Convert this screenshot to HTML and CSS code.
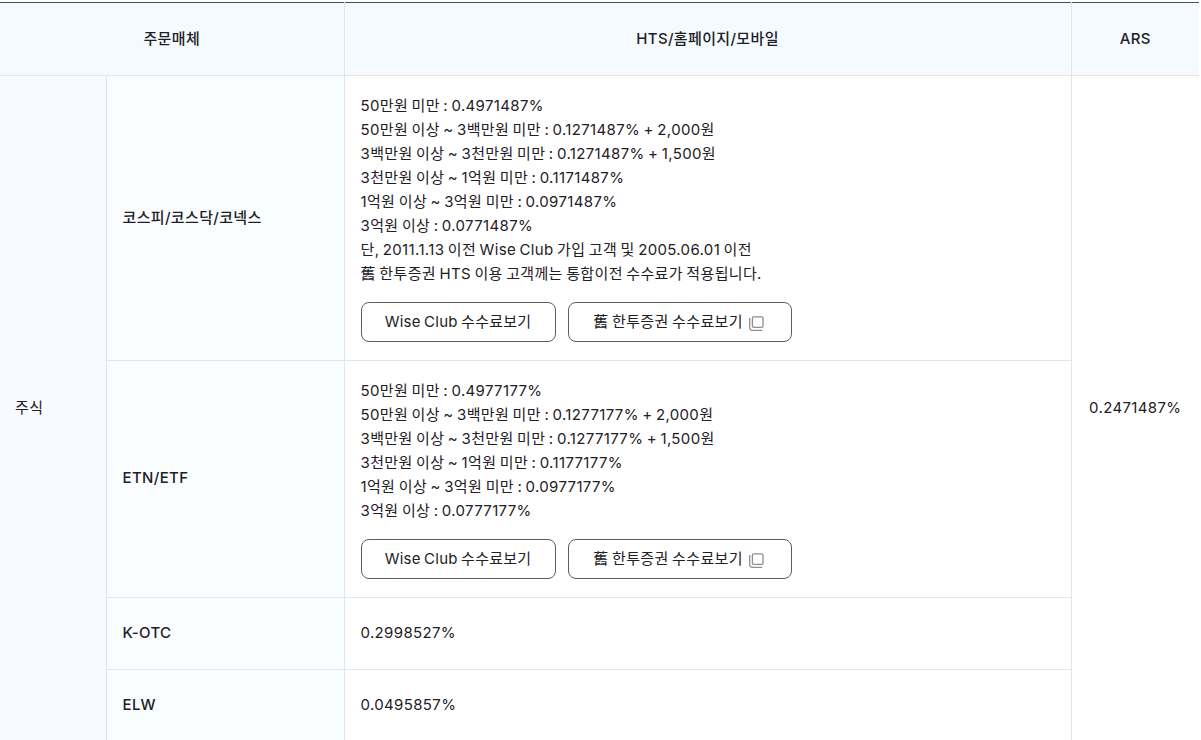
FILE: index.html
```html
<!DOCTYPE html>
<html lang="ko">
<head>
<meta charset="utf-8">
<title>수수료</title>
<link rel="stylesheet" href="styles.css">
</head>
<body>
<table class="fee">
<colgroup><col class="c1"><col class="c2"><col class="c3"><col class="c4"></colgroup>
<thead>
<tr><th colspan="2">주문매체</th><th>HTS/홈페이지/모바일</th><th>ARS</th></tr>
</thead>
<tbody>
<tr class="r1">
<td rowspan="4" class="side">주식</td>
<td class="name">코스피/코스닥/코넥스</td>
<td class="detail">
<p class="lines">50만원 미만 : 0.4971487%<br>50만원 이상 ~ 3백만원 미만 : 0.1271487% + 2,000원<br>3백만원 이상 ~ 3천만원 미만 : 0.1271487% + 1,500원<br>3천만원 이상 ~ 1억원 미만 : 0.1171487%<br>1억원 이상 ~ 3억원 미만 : 0.0971487%<br>3억원 이상 : 0.0771487%<br>단, 2011.1.13 이전 Wise Club 가입 고객 및 2005.06.01 이전<br>舊 한투증권 HTS 이용 고객께는 통합이전 수수료가 적용됩니다.</p>
<div class="btns">
<a class="btn b1">Wise Club 수수료보기</a>
<a class="btn b2">舊 한투증권 수수료보기<svg class="ico" width="15" height="15" viewBox="0 0 15 15" fill="none" stroke="#8c8f96" stroke-width="1.3"><path d="M.7 2v9.8a2.5 2.5 0 0 0 2.5 2.5h10"/><rect x="3.4" y=".9" width="10.6" height="10.4" rx="1.4"/></svg></a>
</div>
</td>
<td rowspan="4" class="ars">0.2471487%</td>
</tr>
<tr class="r2">
<td class="name latin">ETN/ETF</td>
<td class="detail">
<p class="lines">50만원 미만 : 0.4977177%<br>50만원 이상 ~ 3백만원 미만 : 0.1277177% + 2,000원<br>3백만원 이상 ~ 3천만원 미만 : 0.1277177% + 1,500원<br>3천만원 이상 ~ 1억원 미만 : 0.1177177%<br>1억원 이상 ~ 3억원 미만 : 0.0977177%<br>3억원 이상 : 0.0777177%</p>
<div class="btns">
<a class="btn b1">Wise Club 수수료보기</a>
<a class="btn b2">舊 한투증권 수수료보기<svg class="ico" width="15" height="15" viewBox="0 0 15 15" fill="none" stroke="#8c8f96" stroke-width="1.3"><path d="M.7 2v9.8a2.5 2.5 0 0 0 2.5 2.5h10"/><rect x="3.4" y=".9" width="10.6" height="10.4" rx="1.4"/></svg></a>
</div>
</td>
</tr>
<tr class="r3"><td class="name latin">K-OTC</td><td class="detail">0.2998527%</td></tr>
<tr class="r4"><td class="name latin">ELW</td><td class="detail">0.0495857%</td></tr>
</tbody>
</table>
</body>
</html>
```
FILE: styles.css
```css
html, body { margin: 0; padding: 0; background: #fff; overflow: hidden; }
body { padding-top: 2px; height: 738px; font-family: Inter, "Noto Sans CJK KR", sans-serif; font-size: 15px; letter-spacing: 0.35px; word-spacing: -1.1px; color: #1e2026; }
.fee { border-collapse: collapse; table-layout: fixed; width: 1199px; border-top: 1px solid #4b4d57; line-height: 24px; }
.c1 { width: 106px; } .c2 { width: 238px; } .c3 { width: 727px; } .c4 { width: 128px; }
.fee th { height: 72px; padding: 0; background: #f5fafe; font-weight: 500; border: 1px solid #e2e5e9; border-top: 0; text-align: center; }
.fee th:first-child { border-left: 0; }
.fee th:last-child { border-right: 0; }
.fee td { border: 1px solid #e2e5e9; padding: 0 16px; }
.fee td.side { background: #f7fbff; border-left: 0; padding: 0 0 2px 15px; }
.fee td.name { background: #fafdff; font-weight: 500; }
.fee td.latin { padding-bottom: 2px; }
.fee td.detail { padding: 18px 16px; }
.fee td.ars { border-right: 0; padding: 0 0 2px; text-align: center; }
.r3 .detail, .r4 .detail { height: 36px; }
.fee .r3 td.detail, .fee .r4 td.detail { padding: 17px 16px 18px; }
.lines { margin: 0; }
.btns { display: flex; gap: 12px; margin-top: 16px; }
.btn { display: flex; align-items: center; justify-content: center; height: 38px; border: 1px solid #5b5d66; border-radius: 8px; background: #fff; }
.b1 { width: 193px; letter-spacing: 0.25px; }
.b2 { width: 220px; padding-right: 2px; gap: 6px; }
.ico { margin-top: 2px; }
```
